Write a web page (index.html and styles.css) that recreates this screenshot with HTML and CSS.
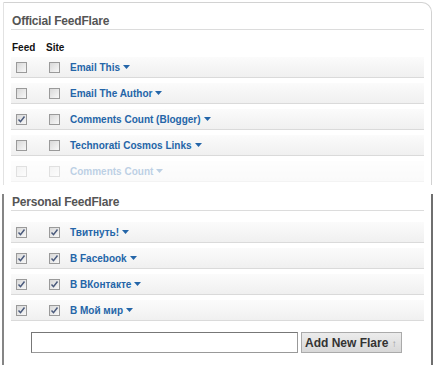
FILE: index.html
```html
<!DOCTYPE html>
<html lang="en">
<head>
  <meta charset="UTF-8" />
  <title>FeedFlare</title>
  <link rel="stylesheet" href="styles.css">
</head>
<body>

  <div class="panel official">
    <h2 class="panel-title">Official FeedFlare</h2>
    <div class="col-head">
      <span class="col-feed">Feed</span>
      <span class="col-site">Site</span>
    </div>
    <ul class="flare-list">
      <li class="flare">
        <span class="cb"></span><span class="cb"></span>
        <a class="flare-name" href="#">Email This<svg class="arrow" width="7" height="4" viewBox="0 0 7 4"><path d="M0 0h7L3.5 4z"/></svg></a>
      </li>
      <li class="flare">
        <span class="cb"></span><span class="cb"></span>
        <a class="flare-name" href="#">Email The Author<svg class="arrow" width="7" height="4" viewBox="0 0 7 4"><path d="M0 0h7L3.5 4z"/></svg></a>
      </li>
      <li class="flare">
        <span class="cb checked"><svg width="9" height="9" viewBox="0 0 9 9"><path d="M1.5 4.5l2 2.2L7.5 1.5" /></svg></span><span class="cb"></span>
        <a class="flare-name" href="#">Comments Count (Blogger)<svg class="arrow" width="7" height="4" viewBox="0 0 7 4"><path d="M0 0h7L3.5 4z"/></svg></a>
      </li>
      <li class="flare">
        <span class="cb"></span><span class="cb"></span>
        <a class="flare-name" href="#">Technorati Cosmos Links<svg class="arrow" width="7" height="4" viewBox="0 0 7 4"><path d="M0 0h7L3.5 4z"/></svg></a>
      </li>
      <li class="flare faded">
        <span class="cb"></span><span class="cb"></span>
        <a class="flare-name" href="#">Comments Count<svg class="arrow" width="7" height="4" viewBox="0 0 7 4"><path d="M0 0h7L3.5 4z"/></svg></a>
      </li>
    </ul>
  </div>

  <div class="panel personal">
    <h2 class="panel-title">Personal FeedFlare</h2>
    <ul class="flare-list">
      <li class="flare">
        <span class="cb checked"><svg width="9" height="9" viewBox="0 0 9 9"><path d="M1.5 4.5l2 2.2L7.5 1.5" /></svg></span><span class="cb checked"><svg width="9" height="9" viewBox="0 0 9 9"><path d="M1.5 4.5l2 2.2L7.5 1.5" /></svg></span>
        <a class="flare-name" href="#">Твитнуть!<svg class="arrow" width="7" height="4" viewBox="0 0 7 4"><path d="M0 0h7L3.5 4z"/></svg></a>
      </li>
      <li class="flare">
        <span class="cb checked"><svg width="9" height="9" viewBox="0 0 9 9"><path d="M1.5 4.5l2 2.2L7.5 1.5" /></svg></span><span class="cb checked"><svg width="9" height="9" viewBox="0 0 9 9"><path d="M1.5 4.5l2 2.2L7.5 1.5" /></svg></span>
        <a class="flare-name" href="#">В Facebook<svg class="arrow" width="7" height="4" viewBox="0 0 7 4"><path d="M0 0h7L3.5 4z"/></svg></a>
      </li>
      <li class="flare">
        <span class="cb checked"><svg width="9" height="9" viewBox="0 0 9 9"><path d="M1.5 4.5l2 2.2L7.5 1.5" /></svg></span><span class="cb checked"><svg width="9" height="9" viewBox="0 0 9 9"><path d="M1.5 4.5l2 2.2L7.5 1.5" /></svg></span>
        <a class="flare-name" href="#">В ВКонтакте<svg class="arrow" width="7" height="4" viewBox="0 0 7 4"><path d="M0 0h7L3.5 4z"/></svg></a>
      </li>
      <li class="flare">
        <span class="cb checked"><svg width="9" height="9" viewBox="0 0 9 9"><path d="M1.5 4.5l2 2.2L7.5 1.5" /></svg></span><span class="cb checked"><svg width="9" height="9" viewBox="0 0 9 9"><path d="M1.5 4.5l2 2.2L7.5 1.5" /></svg></span>
        <a class="flare-name" href="#">В Мой мир<svg class="arrow" width="7" height="4" viewBox="0 0 7 4"><path d="M0 0h7L3.5 4z"/></svg></a>
      </li>
    </ul>

    <div class="add-form">
      <input class="add-input" type="text" />
      <button class="add-button">Add New Flare <span class="up">↑</span></button>
    </div>
  </div>

</body>
</html>
```

FILE: styles.css
```css
body {
  margin: 0;
  background: #fff;
  font-family: "Liberation Sans", Arial, sans-serif;
}

.panel {
  box-sizing: border-box;
  background: #fff;
}

.official {
  margin: 2px 2px 0 3px;
  height: 183px;
  padding: 0 7px;
  border: 1px solid #d2d2d2;
  border-bottom: none;
  border-left-color: #e2e2e2;
  border-top-right-radius: 10px;
  overflow: hidden;
}

.personal {
  margin: 0 1px 0 2px;
  padding: 0 7px 20px 7px;
  border-left: 2px solid #858585;
  border-right: 2px solid #6f6f6f;
}

.panel-title {
  margin: 10px 0 0 0;
  padding-left: 1px;
  font-size: 12px;
  line-height: 16px;
  letter-spacing: -0.2px;
  font-weight: bold;
  color: #555;
  border-bottom: 1px solid #dcdcdc;
}

.personal .panel-title {
  margin-top: 9px;
}

.col-head {
  display: flex;
  margin-top: 12px;
  padding-left: 1px;
  font-size: 10px;
  line-height: 12px;
  font-weight: bold;
  color: #111;
}

.col-feed {
  width: 34px;
}

.flare-list {
  list-style: none;
  margin: 3px 0 0 0;
  padding: 0;
}

.personal .flare-list {
  margin-top: 11px;
}

.flare {
  display: flex;
  align-items: center;
  height: 20px;
  margin-bottom: 5px;
  padding-left: 5px;
  background: linear-gradient(#fbfbfb, #f0f0f0);
  border-bottom: 1px solid #dadada;
}

.flare.faded {
  opacity: 0.3;
}

.cb {
  box-sizing: border-box;
  display: flex;
  align-items: center;
  justify-content: center;
  width: 11px;
  height: 11px;
  border: 1px solid #9a9a9a;
  background: linear-gradient(135deg, #d8d8d8, #f8f8f8);
}

.cb + .cb {
  margin-left: 22px;
}

.cb svg path {
  fill: none;
  stroke: #4a5a7c;
  stroke-width: 1.5;
}

.flare-name {
  display: flex;
  align-items: center;
  margin-left: 10px;
  font-size: 10px;
  font-weight: bold;
  color: #2465a8;
  text-decoration: none;
}

.arrow {
  margin-left: 3px;
  fill: #2465a8;
}

.add-form {
  display: flex;
  gap: 3px;
  margin-top: 11px;
  padding-left: 20px;
}

.add-input {
  box-sizing: border-box;
  width: 267px;
  height: 21px;
  margin: 0;
  border: 1px solid #999;
  border-top-color: #777;
  border-left-color: #777;
}

.add-button {
  box-sizing: border-box;
  width: 101px;
  height: 21px;
  margin: 0;
  padding: 0 3px;
  text-align: left;
  font-family: "Liberation Sans", Arial, sans-serif;
  font-size: 12px;
  font-weight: bold;
  color: #333;
  background: linear-gradient(#ececec, #d8d8d8);
  border: 1px solid #aaa;
}

.add-button .up {
  font-weight: normal;
  font-size: 10px;
  color: #999;
}
```
